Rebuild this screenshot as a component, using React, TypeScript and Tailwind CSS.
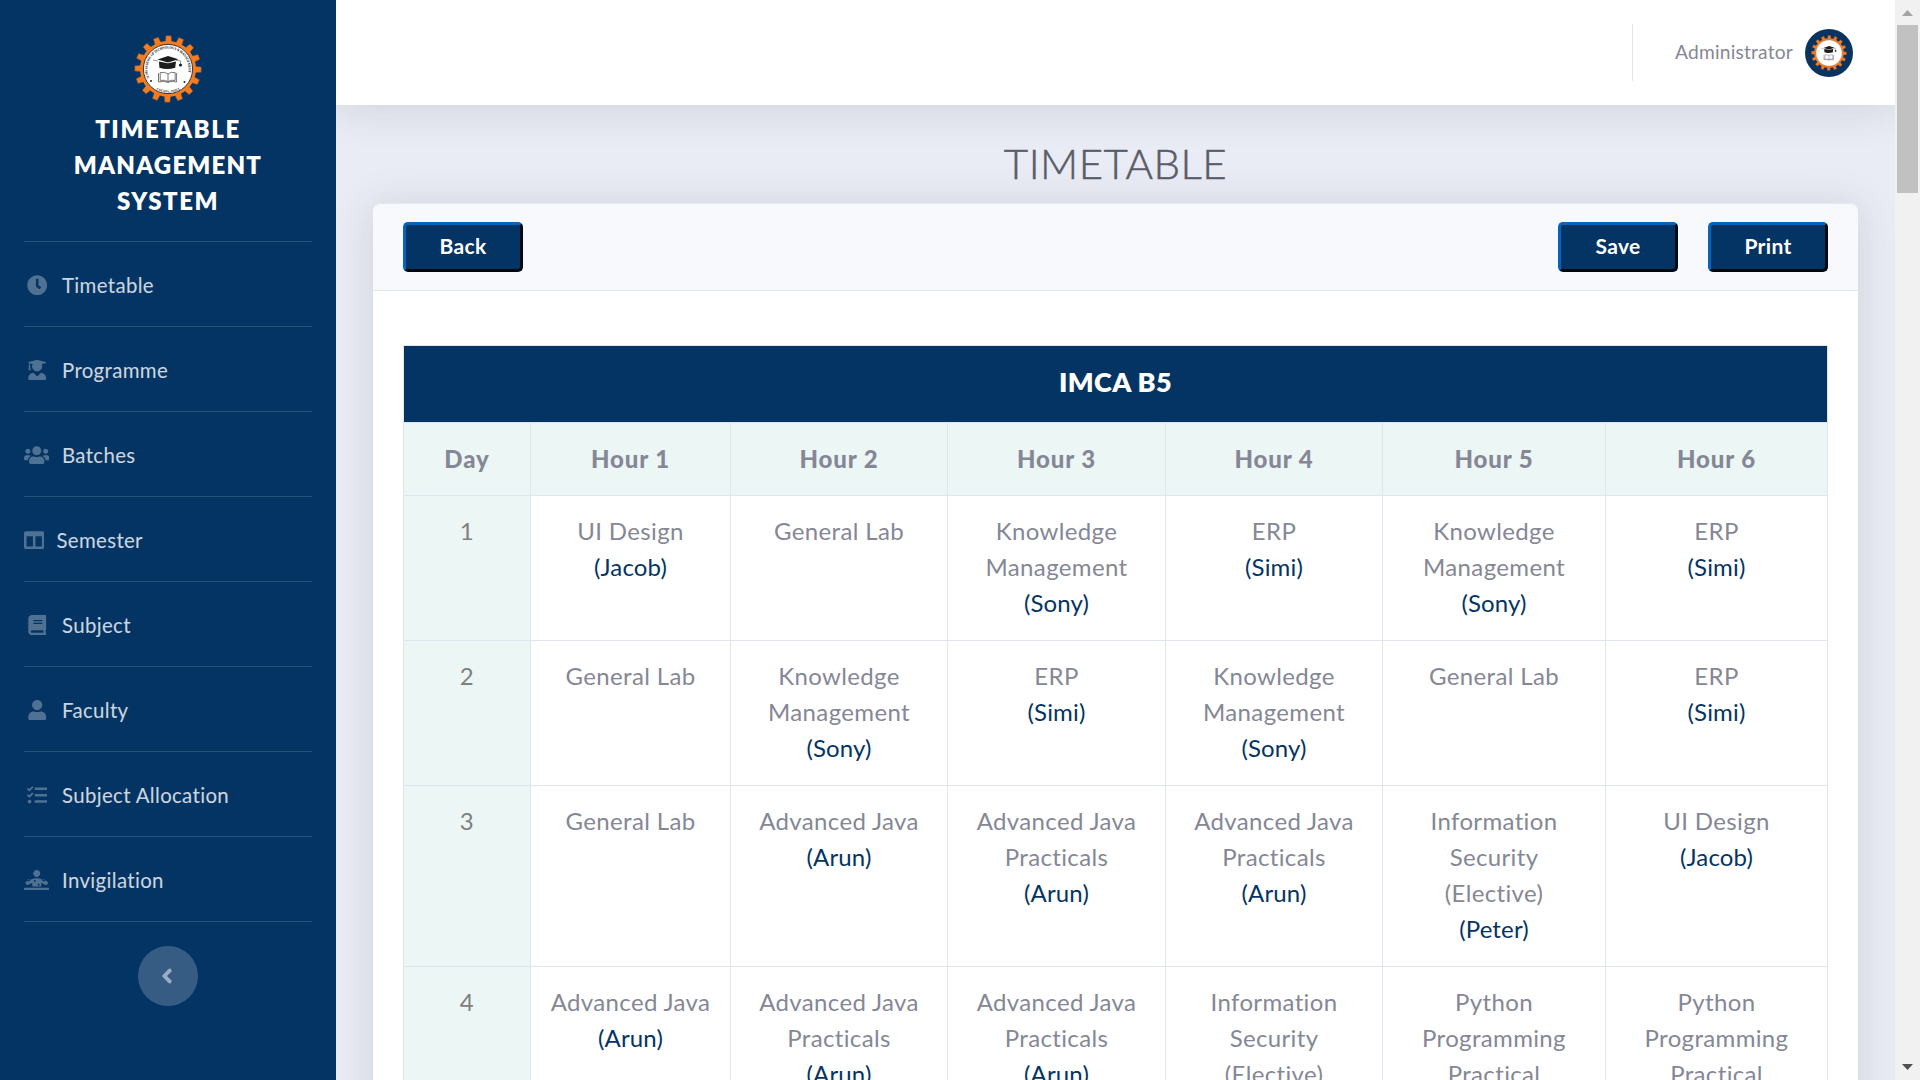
import React from "react";
import {
  FaClock,
  FaUserGraduate,
  FaUsers,
  FaColumns,
  FaBook,
  FaUser,
  FaTasks,
  FaDiagnoses,
  FaAngleLeft,
} from "react-icons/fa";

const TEETH = Array.from({ length: 16 }, (_, i) => i * 22.5);

function Emblem({ className, lettered }: { className: string; lettered?: boolean }) {
  return (
    <svg viewBox="-34 -34 68 68" className={className}>
      <defs>
        <path id="arc-top" d="M-18.6 9 A20.6 20.6 0 1 1 18.6 9" />
        <path id="arc-bottom" d="M-16 17.2 A23.5 23.5 0 0 0 16 17.2" />
      </defs>
      {TEETH.map((a) => (
        <path key={a} d="M-3.3 -26 L-2.6 -33.2 H2.6 L3.3 -26 Z" fill="#f47b20" stroke="#6b5040" strokeWidth="0.5" transform={`rotate(${a + 1})`} />
      ))}
      <circle r="28" fill="#f47b20" />
      <circle r="24.6" fill="#fff" stroke="#3a3330" strokeWidth={lettered ? 1 : 0.3} />
      {lettered && (
        <g fill="#222" fontFamily="Liberation Serif, serif" fontWeight="700" fontSize="3.5">
          <text>
            <textPath href="#arc-top" textLength="77">SCMS SCHOOL OF TECHNOLOGY &amp; MANAGEMENT</textPath>
          </text>
          <text fontSize="3.2">
            <textPath href="#arc-bottom" startOffset="50%" textAnchor="middle">COCHIN, INDIA</textPath>
          </text>
          <circle cx="-17" cy="12" r="1" />
          <circle cx="16.5" cy="13" r="1" />
        </g>
      )}
      <path d="M-10.5 -9.5 L0 -13 L10.5 -9.8 L0 -6.6 Z" fill="#1c1c1c" />
      <path d="M-9 -7.4 Q-1 -6 0 -5.6 Q1 -6 8 -7.4 L7.2 -1.2 Q-1 1.2 -8.6 -1.2 Z" fill="#1c1c1c" />
      <path d="M-15 -9 L-10 -8 M8 -8.6 L12.5 -8.2 V-5" stroke="#555" strokeWidth="0.6" fill="none" />
      <circle cx="12.5" cy="-4" r="1.6" fill="#222" />
      <path d="M-9.5 4 V13 Q-4 11.6 0 13.4 Q4 11.6 8.6 13 V4 M0 13 V5 Q-3 2.4 -7.8 3.6 V11.4 Q-3 10.6 0 12.6 Q3 10.6 7.2 11.4 V3.6 Q3 2.4 0 5" stroke="#555" strokeWidth="0.8" fill="none" />
    </svg>
  );
}

const NAV = [
  { label: "Timetable", Icon: FaClock, box: "w-[26px] mr-3", size: "w-[20.4px] h-[20.4px]" },
  { label: "Programme", Icon: FaUserGraduate, box: "w-[26px] mr-3", size: "w-[20.4px] h-[20.4px]" },
  { label: "Batches", Icon: FaUsers, box: "w-[25px] mr-[13px]", size: "w-[25.5px] h-[20.4px]" },
  { label: "Semester", Icon: FaColumns, box: "w-[20px] mr-[12.5px]", size: "w-[20.4px] h-[20.4px]" },
  { label: "Subject", Icon: FaBook, box: "w-[26px] mr-3", size: "w-[20.4px] h-[20.4px]" },
  { label: "Faculty", Icon: FaUser, box: "w-[26px] mr-3", size: "w-[20.4px] h-[20.4px]" },
  { label: "Subject Allocation", Icon: FaTasks, box: "w-[26px] mr-3", size: "w-[20.4px] h-[20.4px]" },
  { label: "Invigilation", Icon: FaDiagnoses, box: "w-[25px] mr-[13px]", size: "w-[25.5px] h-[20.4px]" },
];

function Sidebar() {
  return (
    <aside className="flex h-full w-[336px] shrink-0 flex-col bg-[#043464] px-6">
      <div className="flex h-[241px] flex-col items-center pt-[35px] text-center">
        <Emblem className="h-[68px] w-[68px] shrink-0" lettered />
        <div className="mt-2 text-[24px] leading-9 font-extrabold text-white">
          <div className="tracking-[1.6px]">TIMETABLE</div>
          <div className="tracking-[1.2px]">MANAGEMENT</div>
          <div className="tracking-[1.5px]">SYSTEM</div>
        </div>
      </div>
      <nav className="border-b border-white/15">
        {NAV.map(({ label, Icon, box, size }) => (
          <a key={label} className="flex h-[85px] items-center border-t border-white/15 pt-[2px] text-[20.4px] tracking-[0.35px] text-white/80">
            <span className={`flex justify-center text-white/30 ${box}`}>
              <Icon className={`shrink-0 ${size}`} />
            </span>
            <span className="whitespace-nowrap">{label}</span>
          </a>
        ))}
      </nav>
      <button className="mt-6 flex h-[60px] w-[60px] items-center justify-center self-center rounded-full bg-white/20 pr-0.5 text-[24px] text-white/50">
        <FaAngleLeft />
      </button>
    </aside>
  );
}

function ActionButton({ children }: { children: string }) {
  return (
    <button className="h-[50px] w-[120px] rounded-[5px] border-3 border-t-[#0563bb] border-r-[#020810] border-b-[#020810] border-l-[#0563bb] bg-[#043464] pb-1 text-[21px] leading-none font-bold tracking-[0.3px] text-white">
      {children}
    </button>
  );
}

type Cell = [string[], string?];
const UI: Cell = [["UI Design"], "Jacob"];
const LAB: Cell = [["General Lab"]];
const KM: Cell = [["Knowledge", "Management"], "Sony"];
const ERP: Cell = [["ERP"], "Simi"];
const JAVA: Cell = [["Advanced Java"], "Arun"];
const JAVAP: Cell = [["Advanced Java", "Practicals"], "Arun"];
const SEC: Cell = [["Information", "Security", "(Elective)"], "Peter"];
const PY: Cell = [["Python", "Programming", "Practical"], "Peter"];

const DAYS: Cell[][] = [
  [UI, LAB, KM, ERP, KM, ERP],
  [LAB, KM, ERP, KM, LAB, ERP],
  [LAB, JAVA, JAVAP, JAVAP, SEC, UI],
  [JAVA, JAVAP, JAVAP, SEC, PY, PY],
];

const GRID = "grid grid-cols-[127px_200px_217px_218px_217px_223px_222px]";
const EDGE = "border-r border-b border-[#e0e3f0]";

function Timetable() {
  return (
    <div className="w-[1425px] border-t border-l border-[#e0e3f0] text-center text-[24px] leading-9 tracking-[0.35px] text-[#858796]">
      <div className={`h-[77px] bg-[#043464] pt-[17px] text-[27px] leading-[38px] font-extrabold tracking-[0.4px] text-white ${EDGE}`}>IMCA B5</div>
      <div className={`h-[73px] font-black tracking-[0.9px] ${GRID}`}>
        {["Day", "Hour 1", "Hour 2", "Hour 3", "Hour 4", "Hour 5", "Hour 6"].map((h) => (
          <div key={h} className={`bg-[#ecf6f5] pt-[18px] ${EDGE}`}>{h}</div>
        ))}
      </div>
      {DAYS.map((row, d) => (
        <div key={d} className={GRID}>
          <div className={`bg-[#ecf6f5] pt-[17px] pb-[19px] text-[#808080] ${EDGE}`}>{d + 1}</div>
          {row.map(([lines, teacher], i) => (
            <div key={i} className={`pt-[17px] pb-[19px] ${EDGE}`}>
              {lines.map((l) => (
                <div key={l} className="whitespace-nowrap">{l}</div>
              ))}
              {teacher && <div className="tracking-[0.15px] text-[#043464]">({teacher})</div>}
            </div>
          ))}
        </div>
      ))}
    </div>
  );
}

function Scrollbar() {
  return (
    <div className="flex h-full w-[25px] shrink-0 flex-col items-center bg-[#f1f1f1]">
      <svg viewBox="0 0 25 25" className="h-[25px] w-[25px] shrink-0">
        <path d="M7 16 L12.5 10 L18 16 Z" fill="#a3a3a3" />
      </svg>
      <div className="h-[168px] w-[21px] bg-[#c1c1c1]" />
      <svg viewBox="0 0 25 25" className="mt-auto h-[25px] w-[25px] shrink-0">
        <path d="M7 9 H18 L12.5 15 Z" fill="#505050" />
      </svg>
    </div>
  );
}

export default function App() {
  return (
    <div className="flex h-[1080px] w-[1920px] overflow-hidden bg-[#e9ecf4] font-['Lato',sans-serif] [font-variant-ligatures:none]">
      <Sidebar />
      <div className="flex h-full min-w-0 flex-1 flex-col overflow-hidden">
        <header className="flex h-[105px] shrink-0 items-center justify-end bg-white pr-[42px] shadow-[0_3.6px_42px_rgba(58,59,69,0.15)]">
          <div className="mr-[42px] h-[57px] w-px bg-[#e3e6f0]" />
          <span className="mr-3 text-[19.2px] tracking-[0.2px] text-[#858796]">Administrator</span>
          <div className="flex h-12 w-12 items-center justify-center rounded-full bg-[#0a335f]">
            <Emblem className="h-9 w-9" />
          </div>
        </header>
        <main className="flex flex-1 flex-col px-9">
          <h1 className="mt-[33px] h-[65px] text-center text-[42px] leading-[50px] font-light tracking-[0.5px] text-[#5a5c69] [-webkit-text-stroke:0.5px_#5a5c69]">TIMETABLE</h1>
          <section className="-mr-px ml-px h-[1400px] w-[1485px] shrink-0 rounded-t-lg bg-white shadow-[0_3.6px_42px_rgba(58,59,69,0.15)]">
            <div className="flex h-[88px] items-start gap-[30px] rounded-t-lg border-t border-b border-[#e3e6f0] bg-[#f8f9fc] px-[30px] pt-[18px]">
              <ActionButton>Back</ActionButton>
              <div className="flex-1" />
              <ActionButton>Save</ActionButton>
              <ActionButton>Print</ActionButton>
            </div>
            <div className="px-[30px] pt-[54px]">
              <Timetable />
            </div>
          </section>
        </main>
      </div>
      <Scrollbar />
    </div>
  );
}
